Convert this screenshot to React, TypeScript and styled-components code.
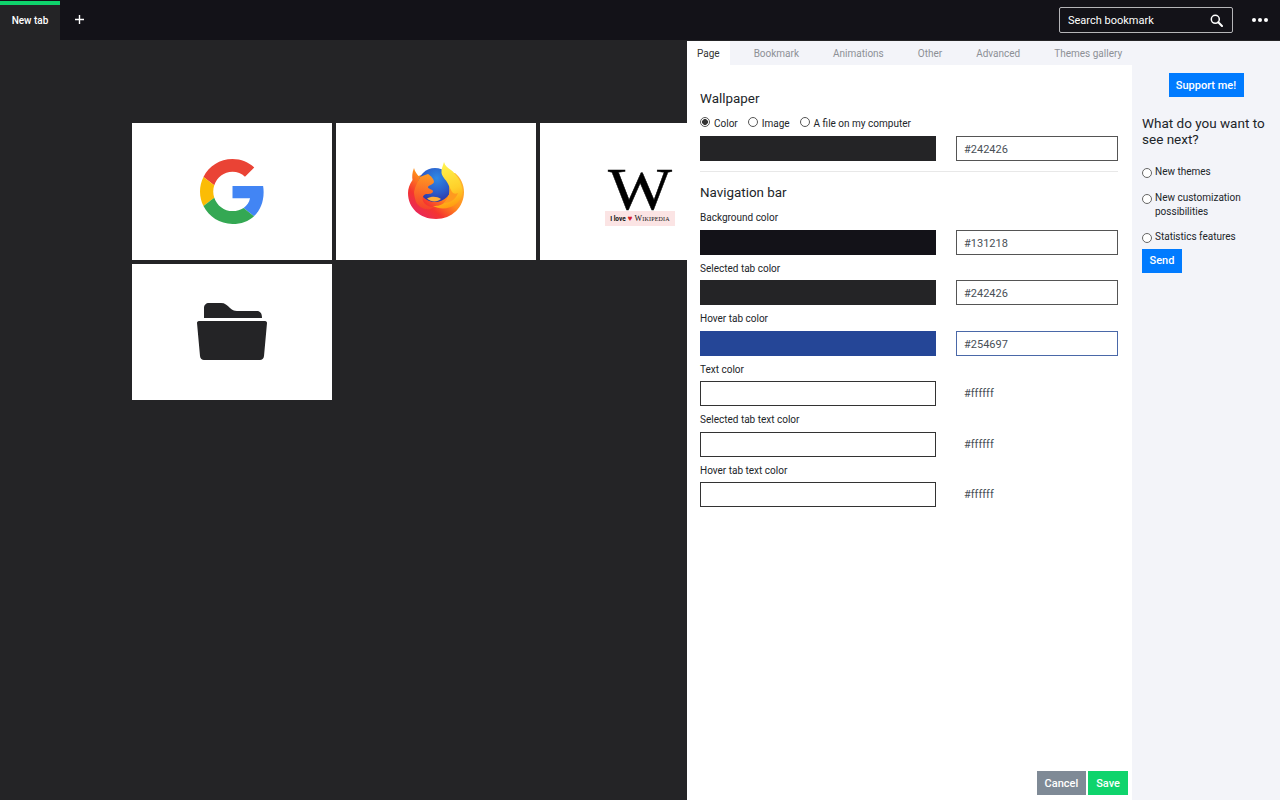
import React from "react"
import styled, { createGlobalStyle } from "styled-components"

const GlobalStyle = createGlobalStyle`
  html, body {
    margin: 0;
    padding: 0;
    height: 100%;
    background: #242426;
    font-family: Roboto, "Liberation Sans", sans-serif;
  }
  * { box-sizing: border-box; }
`

const Page = styled.div`
  position: relative;
  width: 1280px;
  height: 800px;
  overflow: hidden;
  background: #242426;
`

const TopBar = styled.header`
  display: flex;
  align-items: center;
  height: 40px;
  background: #131218;
  color: #fff;
  padding-right: 12px;
`

const ActiveTab = styled.div`
  width: 60px;
  height: 40px;
  margin-top: 1px;
  background: #242426;
  border-top: 4px solid #0fd46c;
  font-size: 10px;
  font-weight: 500;
  line-height: 31px;
  text-align: center;
`

const AddButton = styled.div`
  display: flex;
  margin: -1px 0 0 15px;
`

const SearchBox = styled.div`
  display: flex;
  align-items: center;
  justify-content: space-between;
  width: 174px;
  height: 26px;
  margin-left: auto;
  margin-right: 19px;
  padding: 0 9px 0 8px;
  border: 1px solid #b5b5b8;
  border-radius: 2px;
  font-size: 11px;
`

const Dots = styled.div`
  display: flex;
  gap: 2px;
  span {
    width: 4px;
    height: 4px;
    border-radius: 50%;
    background: #fff;
  }
`

const BookmarkGrid = styled.main`
  display: grid;
  grid-template-columns: repeat(3, 200px);
  grid-auto-rows: 136.5px;
  gap: 4px;
  padding: 83px 0 0 132px;
`

const Bookmark = styled.div`
  display: flex;
  align-items: center;
  justify-content: center;
  background: #fff;
`

const WikiLogo = styled.div`
  display: flex;
  flex-direction: column;
  align-items: center;
  width: 70px;
  margin-top: 14px;
`

const WikiBand = styled.div`
  display: flex;
  align-items: center;
  justify-content: center;
  gap: 2px;
  width: 70px;
  height: 15px;
  background: #fbe4e4;
  color: #111;
  font-size: 6.5px;
  font-weight: 700;
  white-space: nowrap;
`

const WikiHeart = styled.span`
  color: #d3202a;
  font-size: 8px;
`

const WikiName = styled.span`
  font-family: "Liberation Serif", serif;
  font-weight: 400;
  font-variant: small-caps;
  font-size: 8px;
  letter-spacing: 0.2px;
`

const Drawer = styled.aside`
  position: absolute;
  top: 41px;
  left: 687px;
  width: 593px;
  height: 759px;
  display: flex;
  background: #f3f4f9;
`

const MainColumn = styled.section`
  display: flex;
  flex-direction: column;
  width: 445px;
  height: 100%;
`

const Tabs = styled.nav`
  display: flex;
  flex: none;
  height: 24px;
`

const Tab = styled.div<{ $active?: boolean }>`
  height: 24px;
  margin-right: 14px;
  padding: 0 10px;
  line-height: 25px;
  font-size: 10px;
  white-space: nowrap;
  color: ${p => (p.$active ? "#333" : "#8d9096")};
  background: ${p => (p.$active ? "#fff" : "transparent")};
`

const Content = styled.div`
  position: relative;
  flex: 1;
  background: #fff;
  padding: 25.5px 14px 0 13px;
`

const Heading = styled.h2`
  margin: 0;
  font-size: 13.4px;
  font-weight: 400;
  line-height: 16px;
  color: #212529;
`

const RadioRow = styled.div`
  display: flex;
  gap: 10px;
  margin-top: 10.5px;
  height: 13px;
`

const RadioLabel = styled.label`
  display: flex;
  align-items: flex-start;
  gap: 4px;
  font-size: 10px;
  line-height: 13px;
  color: #212529;
`

const Radio = styled.input.attrs({ type: "radio" })`
  appearance: none;
  flex: none;
  width: 10px;
  height: 10px;
  margin: 0;
  border: 1px solid #555;
  border-radius: 50%;
  background: #fff;
  &:checked {
    background: radial-gradient(circle, #333 0 2.6px, #fff 3.2px);
  }
`

const ColorRow = styled.div<{ $first?: boolean }>`
  display: flex;
  gap: 20px;
  align-items: center;
  height: 25px;
  margin-top: ${p => (p.$first ? "6px" : "0")};
`

const Swatch = styled.div<{ $color: string }>`
  width: 236px;
  height: 25px;
  border: ${p => (p.$color == "#ffffff" ? "1px solid #333" : "0")};
  background: ${p => p.$color};
`

const HexInput = styled.div<{ $focused?: boolean }>`
  width: 162px;
  height: 25px;
  padding-left: 7px;
  border: 1px solid ${p => (p.$focused ? "#4a68a8" : "#555")};
  font-size: 11px;
  line-height: 25px;
  color: #495057;
`

const HexText = styled.div`
  padding-left: 8px;
  font-size: 11px;
  color: #495057;
`

const Divider = styled.hr`
  margin: 10px 0 12.5px;
  border: 0;
  border-top: 1px solid #e8e8e8;
`

const NavRows = styled.div`
  padding-top: 3.5px;
`

const FieldLabel = styled.div`
  height: 13px;
  margin: 7px 0 5.5px;
  font-size: 10px;
  line-height: 13px;
  color: #212529;
`

const Footer = styled.div`
  position: absolute;
  right: 4px;
  bottom: 5px;
  display: flex;
  gap: 2px;
`

const Button = styled.button<{ $color: string }>`
  height: 24px;
  padding: 0 8px;
  border: 0;
  background: ${p => p.$color};
  color: #fff;
  font-family: inherit;
  font-size: 11px;
  font-weight: 500;
`

const SideColumn = styled.section`
  flex: 1;
  padding: 32px 10px 0;
`

const SupportWrap = styled.div`
  display: flex;
  justify-content: center;
`

const SupportButton = styled(Button)`
  width: 75px;
  padding: 0;
`

const SideTitle = styled.h3`
  margin: 18px 0 18px;
  font-size: 13.5px;
  font-weight: 400;
  line-height: 16px;
  color: #212529;
`

const Option = styled.label`
  display: flex;
  align-items: flex-start;
  gap: 3px;
  margin-bottom: 11.5px;
  font-size: 10px;
  line-height: 14px;
  color: #212529;
`

const OptionRadio = styled(Radio)`
  margin-top: 3px;
  border-color: #666;
`

const SendButton = styled(Button)`
  display: block;
  margin-top: -7px;
  width: 40px;
  padding: 0;
`

const WikiSvg = styled.svg`
  overflow: visible;
`

const GoogleIcon = () => (
  <svg width="65" height="65" viewBox="0 0 48 48">
    <path fill="#EA4335" d="M24 9.5c3.54 0 6.71 1.22 9.21 3.6l6.85-6.85C35.9 2.38 30.47 0 24 0 14.62 0 6.51 5.38 2.56 13.22l7.98 6.19C12.43 13.72 17.74 9.5 24 9.5z" />
    <path fill="#4285F4" d="M46.98 24.55c0-1.57-.15-3.09-.38-4.55H24v9.02h12.94c-.58 2.96-2.26 5.48-4.78 7.18l7.73 6c4.51-4.18 7.09-10.36 7.09-17.65z" />
    <path fill="#FBBC05" d="M10.53 28.59c-.48-1.45-.76-2.99-.76-4.59s.27-3.14.76-4.59l-7.98-6.19C.92 16.46 0 20.12 0 24c0 3.88.92 7.54 2.56 10.78l7.97-6.19z" />
    <path fill="#34A853" d="M24 48c6.48 0 11.93-2.13 15.89-5.81l-7.73-6c-2.15 1.45-4.92 2.3-8.16 2.3-6.26 0-11.57-4.22-13.47-9.91l-7.98 6.19C6.51 42.62 14.62 48 24 48z" />
  </svg>
)

const FirefoxIcon = () => (
  <svg width="56" height="58" viewBox="0 0 56 58">
    <defs>
      <linearGradient id="ffBody" x1="0.85" y1="0.25" x2="0.2" y2="0.95">
        <stop offset="0" stopColor="#ffb02e" />
        <stop offset="0.4" stopColor="#ff8a1c" />
        <stop offset="0.72" stopColor="#f5352f" />
        <stop offset="1" stopColor="#e8285c" />
      </linearGradient>
      <linearGradient id="ffFlame" x1="0.4" y1="0" x2="0.6" y2="1">
        <stop offset="0" stopColor="#fff44f" />
        <stop offset="0.6" stopColor="#ffd02a" />
        <stop offset="1" stopColor="#ff980e" />
      </linearGradient>
      <radialGradient id="ffGlobe" cx="0.55" cy="0.3" r="0.8">
        <stop offset="0" stopColor="#2f8ae6" />
        <stop offset="0.55" stopColor="#2c5ac8" />
        <stop offset="1" stopColor="#2f2a96" />
      </radialGradient>
      <linearGradient id="ffHead" x1="0.5" y1="0" x2="0.4" y2="1">
        <stop offset="0" stopColor="#ff9a22" />
        <stop offset="1" stopColor="#f5402c" />
      </linearGradient>
    </defs>
    <path fill="url(#ffBody)" d="M6 6 C4 11 4 15 4.500 18 C1.500 22 0 27 0 31 C0 46 12 57 28 57 C44 57 56 45 56 30 C56 23 53 16 47 11 L20 13 C16 12 13 13 10.500 14 C9 12 7 10 6 6 Z" />
    <circle cx="27" cy="23" r="17" fill="url(#ffGlobe)" />
    <path fill="url(#ffFlame)" d="M36 0 C35 4 33 7 33.500 11 C34.500 16 39 18 41 24 C42.500 30 41 37 36 41 C32 44 28 44 25 44 C32 48 42 47 48 42 C53 38 55 33 54.500 28 C53 18 48 12 43 8 C40 6 37 4 36 0 Z" />
    <path fill="#ff9a1f" d="M41 24 C42.500 30 41 37 36 41 C40 41 47 39 50 31 C47 33 44 31 43 28 C42 26 41.500 25 41 24 Z" />
    <path fill="url(#ffHead)" d="M6 30 C7 24 10 20 12 15 C14 14 17 13 20 12 C23 14 26 17 26 20 C25 23 21 23 20 25 C20 27 24 27 25 29 C25 32 21 32 18 32 C15 33 14 36 15 39 C17 43 21 45 26 45 C20 50 11 46 8 40 C7 37 6 33 6 30 Z" />
    <path fill="#ffb03a" d="M19 36.500 C23 34 29 34 33 37 C29 40.500 23 40 19 36.500 Z" />
  </svg>
)

const WikiLetterIcon = () => (
  <WikiSvg width="66" height="41" viewBox="0 0 66 41">
    <text x="33" y="39" fontFamily="'Liberation Serif', serif" fontSize="59" textAnchor="middle" textLength="64" lengthAdjust="spacingAndGlyphs" fill="#000" stroke="#000" strokeWidth="0.4">
      W
    </text>
  </WikiSvg>
)

const FolderIcon = () => (
  <svg width="70" height="57" viewBox="0 0 70 57">
    <path fill="#242426" d="M7 15 L7 5 C7 2 9 0 12 0 L24 0 C28 0 30 2 33 5 C35 7 37 8 40 8 L60 8 C63 8 65 10 65 15 Z" />
    <path fill="#242426" d="M2 18 L68 18 C69.500 18 70 19 70 20 L67 53 C66.800 55.500 65 57 63 57 L7 57 C5 57 3.200 55.500 3 53 L0 20 C0 19 0.500 18 2 18 Z" />
  </svg>
)

const SearchIcon = () => (
  <svg width="13" height="13" viewBox="0 0 13 13" fill="none" stroke="#fff">
    <circle cx="5.3" cy="5.3" r="4" strokeWidth="1.5" />
    <path d="M8.300 8.300 L12 12" strokeWidth="2" strokeLinecap="round" />
  </svg>
)

const PlusIcon = () => (
  <svg width="9" height="9" viewBox="0 0 9 9" stroke="#fff" strokeWidth="1.4">
    <path d="M4.500 0 V9 M0 4.500 H9" />
  </svg>
)

const tabNames = ["Page", "Bookmark", "Animations", "Other", "Advanced", "Themes gallery"]

const navColors = [
  { label: "Background color", color: "#131218", hex: "#131218", input: true },
  { label: "Selected tab color", color: "#242426", hex: "#242426", input: true },
  { label: "Hover tab color", color: "#254697", hex: "#254697", input: true, focused: true },
  { label: "Text color", color: "#ffffff", hex: "#ffffff" },
  { label: "Selected tab text color", color: "#ffffff", hex: "#ffffff" },
  { label: "Hover tab text color", color: "#ffffff", hex: "#ffffff" },
]

export default function App() {
  return (
    <Page>
      <GlobalStyle />
      <TopBar>
        <ActiveTab>New tab</ActiveTab>
        <AddButton>
          <PlusIcon />
        </AddButton>
        <SearchBox>
          Search bookmark
          <SearchIcon />
        </SearchBox>
        <Dots>
          <span />
          <span />
          <span />
        </Dots>
      </TopBar>

      <BookmarkGrid>
        <Bookmark>
          <GoogleIcon />
        </Bookmark>
        <Bookmark>
          <FirefoxIcon />
        </Bookmark>
        <Bookmark>
          <WikiLogo>
            <WikiLetterIcon />
            <WikiBand>
              I love <WikiHeart>♥</WikiHeart> <WikiName>Wikipedia</WikiName>
            </WikiBand>
          </WikiLogo>
        </Bookmark>
        <Bookmark>
          <FolderIcon />
        </Bookmark>
      </BookmarkGrid>

      <Drawer>
        <MainColumn>
          <Tabs>
            {tabNames.map((name, i) => (
              <Tab key={name} $active={i == 0}>
                {name}
              </Tab>
            ))}
          </Tabs>
          <Content>
            <Heading>Wallpaper</Heading>
            <RadioRow>
              <RadioLabel>
                <Radio name="wallpaper" defaultChecked />
                Color
              </RadioLabel>
              <RadioLabel>
                <Radio name="wallpaper" />
                Image
              </RadioLabel>
              <RadioLabel>
                <Radio name="wallpaper" />A file on my computer
              </RadioLabel>
            </RadioRow>
            <ColorRow $first>
              <Swatch $color="#242426" />
              <HexInput>#242426</HexInput>
            </ColorRow>
            <Divider />
            <Heading>Navigation bar</Heading>
            <NavRows>
              {navColors.map(row => (
                <div key={row.label}>
                  <FieldLabel>{row.label}</FieldLabel>
                  <ColorRow>
                    <Swatch $color={row.color} />
                    {row.input ? (
                      <HexInput $focused={row.focused}>{row.hex}</HexInput>
                    ) : (
                      <HexText>{row.hex}</HexText>
                    )}
                  </ColorRow>
                </div>
              ))}
            </NavRows>
            <Footer>
              <Button $color="#7f8a96">Cancel</Button>
              <Button $color="#0fd46c">Save</Button>
            </Footer>
          </Content>
        </MainColumn>

        <SideColumn>
          <SupportWrap>
            <SupportButton $color="#007bff">Support me!</SupportButton>
          </SupportWrap>
          <SideTitle>What do you want to see next?</SideTitle>
          <Option>
            <OptionRadio name="next" />
            New themes
          </Option>
          <Option>
            <OptionRadio name="next" />
            New customization possibilities
          </Option>
          <Option>
            <OptionRadio name="next" />
            Statistics features
          </Option>
          <SendButton $color="#007bff">Send</SendButton>
        </SideColumn>
      </Drawer>
    </Page>
  )
}
